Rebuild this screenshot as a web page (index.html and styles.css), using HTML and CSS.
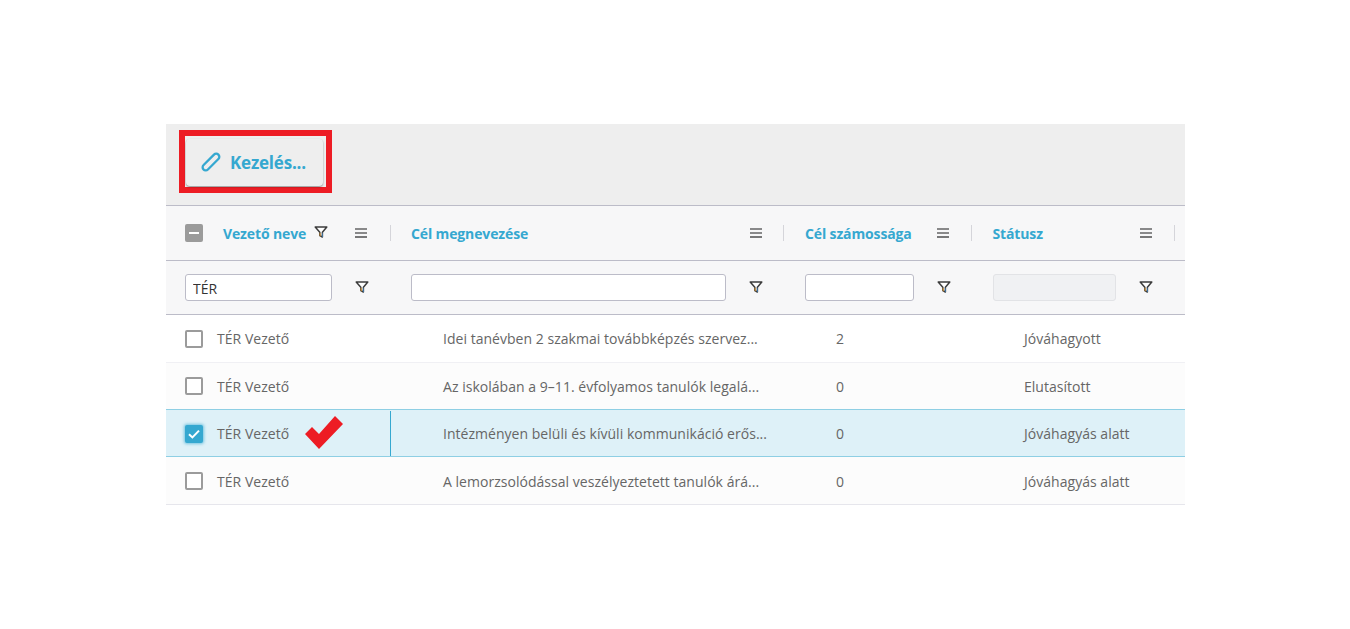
FILE: index.html
```html
<!DOCTYPE html>
<html lang="hu">
<head>
<meta charset="utf-8">
<title>Kezelés</title>
<link rel="stylesheet" href="styles.css">
</head>
<body>
<svg class="defs" width="0" height="0" aria-hidden="true">
  <symbol id="funnel" viewBox="0 0 14 14"><path d="M1.2 2h11.6L8.4 7.2v4.9L5.8 10.6V7.2z" fill="#fff" stroke="#3c3c3c" stroke-width="1.5" stroke-linejoin="round"/><path d="M5.6 7.4v3.4l1 .8V8.4z" fill="#e0982c"/><path d="M8.6 7.6l-.6.6v3.6l.8.4z" fill="#3f86c4"/></symbol>
  <symbol id="menu" viewBox="0 0 12 10"><path d="M0 1h12M0 5h12" stroke="#666" stroke-width="1.3"/><path d="M0 9h12" stroke="#333" stroke-width="1.3"/></symbol>
</svg>
<main class="panel">
  <div class="toolbar">
    <div class="highlight">
      <button class="manage" type="button">
        <svg class="pencil" viewBox="0 0 20 20"><path d="M2.6 13 13 2.6a3.1 3.1 0 0 1 4.4 4.4L6.9 17.5a3 3 0 0 1-4.4-.1 3.1 3.1 0 0 1 .1-4.4z" fill="none" stroke="#35a8d0" stroke-width="2.3" stroke-linejoin="round"/></svg>
        <span>Kezelés...</span>
      </button>
    </div>
  </div>
  <div class="row head">
    <div class="cell c1"><span class="box minus"></span><b class="title t1">Vezető neve</b><svg class="fn fn-head"><use href="#funnel"/></svg><svg class="mn mn1"><use href="#menu"/></svg></div>
    <div class="cell c2"><b class="title">Cél megnevezése</b><svg class="mn"><use href="#menu"/></svg></div>
    <div class="cell c3"><b class="title">Cél számossága</b><svg class="mn"><use href="#menu"/></svg></div>
    <div class="cell c4"><b class="title">Státusz</b><svg class="mn"><use href="#menu"/></svg></div>
    <div class="cell c5"></div>
  </div>
  <div class="row filter">
    <div class="cell c1"><input class="inp i1" type="text" value="TÉR"><svg class="fn"><use href="#funnel"/></svg></div>
    <div class="cell c2"><input class="inp i2" type="text"><svg class="fn"><use href="#funnel"/></svg></div>
    <div class="cell c3"><input class="inp i3" type="text"><svg class="fn"><use href="#funnel"/></svg></div>
    <div class="cell c4"><input class="inp i4" type="text" disabled><svg class="fn"><use href="#funnel"/></svg></div>
    <div class="cell c5"></div>
  </div>
  <div class="row data h48">
    <div class="cell c1"><span class="box"></span><span class="name">TÉR Vezető</span></div>
    <div class="cell c2 txt">Idei tanévben 2 szakmai továbbképzés szervez...</div>
    <div class="cell c3 num">2</div>
    <div class="cell c4 txt">Jóváhagyott</div>
  </div>
  <div class="row data alt h47">
    <div class="cell c1"><span class="box"></span><span class="name">TÉR Vezető</span></div>
    <div class="cell c2 txt">Az iskolában a 9–11. évfolyamos tanulók legalá...</div>
    <div class="cell c3 num">0</div>
    <div class="cell c4 txt">Elutasított</div>
  </div>
  <div class="row data selected">
    <div class="cell c1 focus"><span class="box checked"><svg viewBox="0 0 12 10"><path d="M1 5.2 4.4 8.4 11 1.6" fill="none" stroke="#fff" stroke-width="2"/></svg></span><span class="name">TÉR Vezető</span>
      <svg class="tick" viewBox="0 0 38 33"><path d="M0 18 7 11 14 18 30 0 38 8 14 33z" fill="#ed1c24"/></svg></div>
    <div class="cell c2 txt">Intézményen belüli és kívüli kommunikáció erős...</div>
    <div class="cell c3 num">0</div>
    <div class="cell c4 txt">Jóváhagyás alatt</div>
  </div>
  <div class="row data alt h48 last">
    <div class="cell c1"><span class="box"></span><span class="name">TÉR Vezető</span></div>
    <div class="cell c2 txt">A lemorzsolódással veszélyeztetett tanulók árá...</div>
    <div class="cell c3 num">0</div>
    <div class="cell c4 txt">Jóváhagyás alatt</div>
  </div>
</main>
</body>
</html>
```
FILE: styles.css
```css
html, body { margin: 0; padding: 0; background: #fff; }
body { font-family: "Open Sans", "Noto Sans", sans-serif; font-size: 14px; color: #666; }
.defs { position: absolute; }
.panel { width: 1019px; margin: 124px 0 0 166px; }
.toolbar { background: #eee; box-sizing: border-box; padding: 6px 0 0 13px; border-bottom: 1px solid #bcbcc8; height: 82px; }
.highlight { width: 153px; height: 63px; box-sizing: border-box; border: 6px solid #ed1c24; padding: 3px 0 0 1px; }
.manage { width: 137px; height: 47px; display: flex; align-items: center; padding: 0 0 1px 15px; gap: 9px; border: 0; border-radius: 4px; background: #eee; box-shadow: 0 1px 2px rgba(0,0,0,.4); font: 700 17px "Open Sans", sans-serif; letter-spacing: -.2px; color: #35a8d0; }
.pencil { width: 20px; height: 20px; flex: none; }
.row { display: grid; grid-template-columns: 225px 393px 188px 203px 10px; }
.cell { display: flex; align-items: center; box-sizing: border-box; min-width: 0; position: relative; }
.head { height: 55px; background: #f7f7f8; border-bottom: 1px solid #bcbcc8; box-sizing: border-box; }
.head .cell:not(.c5)::after { content: ""; position: absolute; right: 0; top: 19px; height: 16px; width: 1px; background: #d5d5da; }
.filter { height: 54px; background: #f7f7f8; border-bottom: 1px solid #bcbcc8; box-sizing: border-box; }
.title { color: #35a8d0; font-weight: 700; font-size: 14px; letter-spacing: -.13px; white-space: nowrap; }
.c1 { padding-left: 19px; }
.c2 { padding-left: 20px; }
.c3 { padding-left: 21px; }
.c4 { padding-left: 21px; }
.head .c4 { padding-left: 20.5px; }
.head .mn { margin-left: auto; margin-right: 23px; }
.head .c2 .mn { margin-right: 22px; }
.head .mn1 { margin-right: 24px; }
.t1 { margin-left: 20px; }
.fn { width: 14px; height: 14px; flex: none; }
.fn-head { margin-left: 8px; position: relative; top: -1px; }
.mn { width: 12px; height: 10px; flex: none; }
.box { width: 18px; height: 18px; box-sizing: border-box; border: 2px solid #9b9b9b; border-radius: 2px; background: #fff; flex: none; display: flex; align-items: center; justify-content: center; }
.minus { background: #9b9b9b; }
.minus::before { content: ""; width: 10px; height: 2px; background: #fff; }
.checked { background: #35a8d0; border-color: #35a8d0; box-shadow: 0 0 3px 1px rgba(47,168,208,.6); }
.checked svg { width: 12px; height: 10px; }
.inp { height: 27px; box-sizing: border-box; border: 1px solid #bcbcc8; border-radius: 3px; background: #fff; padding: 2px 7px 0; font: 14px "Open Sans", sans-serif; color: #333; outline: 0; margin: 0; }
.inp:disabled { background: #f0f1f3; border-color: #e2e3e6; }
.i1 { width: 147px; margin-right: 23px; }
.i2 { width: 315px; margin-right: 23px; }
.i3 { width: 109px; margin-right: 23px; }
.i4 { width: 123px; margin-right: 23px; }
.filter .fn { position: relative; top: -1px; }
.data { box-sizing: border-box; border-bottom: 1px solid #f0f0f4; background: #fff; letter-spacing: .03px; }
.h47 { height: 47px; }
.h48 { height: 48px; }
.last { border-bottom-color: #e6e6ec; padding-top: 1px; }
.alt { background: #fcfcfc; }
.selected { background: #def1f8; border-top: 1px solid #8ecfe4; border-bottom: 1px solid #8ecfe4; height: 48px; margin-top: -1px; padding-top: 1px; }
.name { margin-left: 14px; white-space: nowrap; }
.txt { white-space: nowrap; }
.data .c2, .data .c3, .data .c4 { padding-left: 52px; }
.focus { border-right: 1px solid #35a8d0; }
.tick { width: 38px; height: 33px; position: absolute; left: 139px; top: 5px; }
```
